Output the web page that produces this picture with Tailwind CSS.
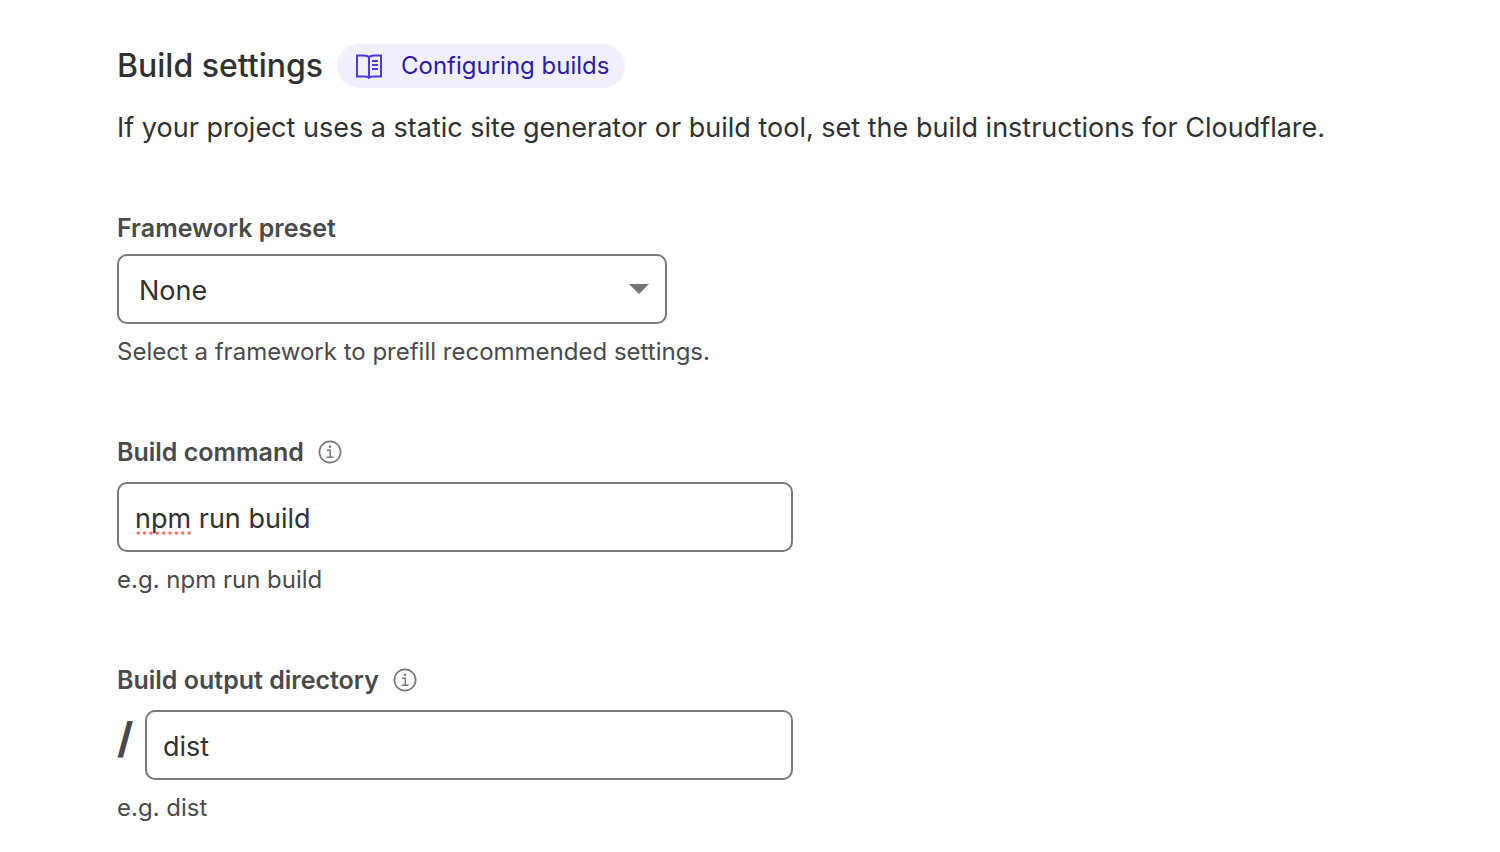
<!DOCTYPE html>
<html lang="en">
<head>
<meta charset="utf-8">
<meta name="viewport" content="width=device-width, initial-scale=1">
<title>Build settings</title>
<script src="https://cdn.jsdelivr.net/npm/@tailwindcss/browser@4"></script>
</head>
<body class="bg-white font-['Inter',sans-serif] text-[#313131]">
<main class="px-[117px] pt-11">
  <header class="flex h-11 items-center gap-3.5">
    <h1 class="text-[32px] leading-10 font-medium">Build settings</h1>
    <a href="#" class="flex h-11 items-center gap-4 rounded-full bg-[#f1effc] px-4 text-2xl text-[#2c1ba5]">
      <svg class="size-8 text-[#4a3adf]" viewBox="0 0 32 32" fill="none" stroke="currentColor" stroke-width="2" aria-hidden="true">
        <path d="M16 7.500C15 6 13 5.500 11 5.500H4v21h7c2 0 4 0 5 1C17 26.500 19 26.500 21 26.500h7v-21h-7c-2 0-4 .5-5 2z"/>
        <path d="M16 6.500v22M19 11h6M19 15h6M19 19h6"/>
      </svg>
      Configuring builds
    </a>
  </header>
  <p class="mt-5 text-[27px] leading-10">If your project uses a static site generator or build tool, set the build instructions for Cloudflare.</p>

  <form class="mt-[62px] flex max-w-[676px] flex-col gap-[66px] text-[#4a4a4a]">
    <div>
      <label for="preset" class="block text-[25px] leading-9 font-semibold">Framework preset</label>
      <div class="relative mt-2 max-w-[550px]">
        <select id="preset" aria-describedby="preset-help" class="h-[70px] w-full appearance-none rounded-[10px] border-2 border-[#797979] bg-white pt-1 pr-12 pl-5 text-[27px] text-[#313131]">
          <option>None</option>
        </select>
        <svg class="pointer-events-none absolute top-[30px] right-4 h-[10px] w-6" viewBox="0 0 24 10" fill="#6e757b" aria-hidden="true"><path d="M2 0h20L12 10z"/></svg>
      </div>
      <p id="preset-help" class="mt-3 text-2xl leading-8">Select a framework to prefill recommended settings.</p>
    </div>

    <div>
      <div class="flex items-center gap-3.5">
        <label for="command" class="text-[25px] leading-9 font-semibold">Build command</label>
        <button type="button" aria-label="About the build command">
          <svg class="size-6" viewBox="0 0 24 24" fill="none" stroke="#797979" aria-hidden="true"><circle cx="12" cy="12" r="10.600" stroke-width="1.700"/><path d="M9 10.300h3.300v7M8.500 17.300h7" stroke-width="1.500"/><circle cx="12" cy="6.700" r="1.300" fill="#797979" stroke="none"/></svg>
        </button>
      </div>
      <div class="relative mt-3">
        <input id="command" type="text" value="npm run build" spellcheck="false" aria-describedby="command-help" class="h-[70px] w-full rounded-[10px] border-2 border-[#797979] bg-white px-4 pt-0.5 text-[27px] text-[#313131]">
        <svg class="pointer-events-none absolute top-[49px] left-[19px] h-1 w-14" viewBox="0 0 56 4" aria-hidden="true"><path d="M2 2h53" stroke="#ff6a63" stroke-width="3" stroke-linecap="round" stroke-dasharray="0.500 5.850"/></svg>
      </div>
      <p id="command-help" class="mt-3 text-2xl leading-8">e.g. npm run build</p>
    </div>

    <div>
      <div class="flex items-center gap-3.5">
        <label for="output" class="text-[25px] leading-9 font-semibold">Build output directory</label>
        <button type="button" aria-label="About the build output directory">
          <svg class="size-6" viewBox="0 0 24 24" fill="none" stroke="#797979" aria-hidden="true"><circle cx="12" cy="12" r="10.600" stroke-width="1.700"/><path d="M9 10.300h3.300v7M8.500 17.300h7" stroke-width="1.500"/><circle cx="12" cy="6.700" r="1.300" fill="#797979" stroke="none"/></svg>
        </button>
      </div>
      <div class="mt-3 flex">
        <span class="w-7 shrink-0 text-[42px] leading-14 font-bold">/</span>
        <input id="output" type="text" value="dist" aria-describedby="output-help" class="h-[70px] w-full rounded-[10px] border-2 border-[#797979] bg-white px-4 pt-0.5 text-[27px] text-[#313131]">
      </div>
      <p id="output-help" class="mt-3 text-2xl leading-8">e.g. dist</p>
    </div>
  </form>
</main>
</body>
</html>
